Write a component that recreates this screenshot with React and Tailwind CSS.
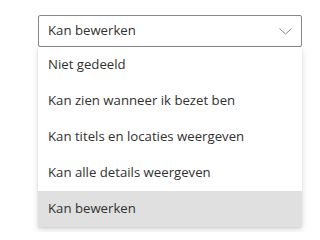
const OPTIONS = [
  'Niet gedeeld',
  'Kan zien wanneer ik bezet ben',
  'Kan titels en locaties weergeven',
  'Kan alle details weergeven',
  'Kan bewerken',
];

export default function App() {
  const selected = 'Kan bewerken';
  return (
    <div className="w-[306px] h-[232px] bg-white pl-[38px] pt-[15px] font-['Open_Sans','Noto_Sans',sans-serif] text-[#323130]">
      <div className="relative w-[264px]">
        {/* combobox */}
        <div className="h-[32px] flex items-center justify-between border border-[#8a8886] rounded-[2px] pl-[9px] pr-[8px]">
          <span className="text-[13.2px] leading-none">{selected}</span>
          <svg width="13" height="7" viewBox="0 0 13 7" fill="none" className="mr-[1px]">
            <path d="M0.5 0.5 L6.5 6 L12.5 0.5" stroke="#8a8886" strokeWidth="1" />
          </svg>
        </div>
        {/* listbox */}
        <ul className="absolute left-0 top-[32px] w-[264px] bg-white shadow-[0_3px_7px_rgba(0,0,0,0.13),0_0.6px_2px_rgba(0,0,0,0.1)]">
          {OPTIONS.map((opt) => (
            <li
              key={opt}
              className={`h-[36px] flex items-center pl-[10px] text-[13.2px] ${
                opt === selected ? 'bg-[#e0e0e0]' : ''
              }`}
            >
              {opt}
            </li>
          ))}
        </ul>
      </div>
    </div>
  );
}
